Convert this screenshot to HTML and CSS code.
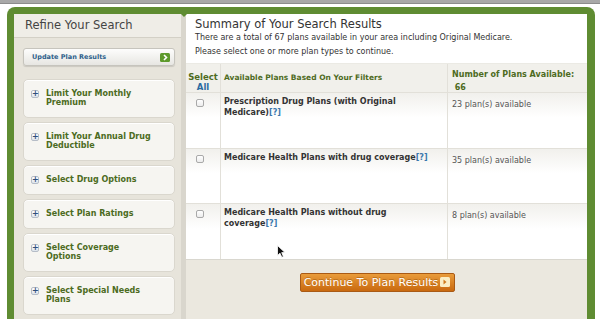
FILE: index.html
```html
<!DOCTYPE html>
<html lang="en">
<head>
    <meta charset="UTF-8">
    <meta name="viewport" content="width=device-width, initial-scale=1.0">
    <title>Refine Your Search</title>
    <link rel="stylesheet" href="styles.css">
</head>
<body>
    <div class="topbar"></div>
    <div class="frame">
        <aside class="sidebar">
            <div class="sidebar-head">Refine Your Search</div>
            <div class="sidebar-body">
                <button class="update-btn">
                    <span>Update Plan Results</span>
                    <svg class="go-icon" width="10" height="9" viewBox="0 0 10 9">
                        <rect width="10" height="9" rx="1.5" fill="#5e9a2c"/>
                        <path d="M4 2 L6.5 4.5 L4 7" fill="none" stroke="#fff" stroke-width="1.6"/>
                    </svg>
                </button>
                <ul class="filter-list">
                    <li class="filter"><span class="plus">+</span><span class="filter-text">Limit Your Monthly Premium</span></li>
                    <li class="filter"><span class="plus">+</span><span class="filter-text">Limit Your Annual Drug Deductible</span></li>
                    <li class="filter"><span class="plus">+</span><span class="filter-text">Select Drug Options</span></li>
                    <li class="filter"><span class="plus">+</span><span class="filter-text">Select Plan Ratings</span></li>
                    <li class="filter"><span class="plus">+</span><span class="filter-text">Select Coverage Options</span></li>
                    <li class="filter"><span class="plus">+</span><span class="filter-text">Select Special Needs Plans</span></li>
                </ul>
            </div>
        </aside>

        <main class="main">
            <div class="summary">
                <h1>Summary of Your Search Results</h1>
                <p>There are a total of 67 plans available in your area including Original Medicare.</p>
                <p>Please select one or more plan types to continue.</p>
            </div>

            <div class="plans">
                <div class="plan-row plan-head">
                    <div class="cell cell-check"><span class="select-label">Select</span><br><a class="select-all">All</a></div>
                    <div class="cell cell-name head-text">Available Plans Based On Your Filters</div>
                    <div class="cell cell-count head-text head-count">Number of Plans Available:<br>&nbsp;66</div>
                </div>
                <div class="plan-row">
                    <div class="cell cell-check"><input type="checkbox" class="check"></div>
                    <div class="cell cell-name">Prescription Drug Plans (with Original Medicare)<a class="help">[?]</a></div>
                    <div class="cell cell-count">23 plan(s) available</div>
                </div>
                <div class="plan-row">
                    <div class="cell cell-check"><input type="checkbox" class="check"></div>
                    <div class="cell cell-name">Medicare Health Plans with drug coverage<a class="help">[?]</a></div>
                    <div class="cell cell-count">35 plan(s) available</div>
                </div>
                <div class="plan-row">
                    <div class="cell cell-check"><input type="checkbox" class="check"></div>
                    <div class="cell cell-name">Medicare Health Plans without drug coverage<a class="help">[?]</a></div>
                    <div class="cell cell-count">8 plan(s) available</div>
                </div>
            </div>

            <div class="actions">
                <button class="continue-btn">
                    <span>Continue To Plan Results</span>
                    <svg class="go-icon" width="10" height="10" viewBox="0 0 10 10">
                        <rect width="10" height="10" rx="1.5" fill="#fbeec4"/>
                        <path d="M3.5 2.5 L6.5 5 L3.5 7.5 Z" fill="#cf7a1c"/>
                    </svg>
                </button>
            </div>
        </main>

        <svg class="cursor" width="9" height="13" viewBox="0 0 9 13">
            <path d="M0.5 0.5 L0.5 10.5 L3 8.2 L4.8 12.3 L6.4 11.6 L4.7 7.6 L8 7.6 Z" fill="#111" stroke="#fff" stroke-width="0.8"/>
        </svg>
    </div>
</body>
</html>
```

FILE: styles.css
```css
body {
    font-family: "DejaVu Sans", Verdana, sans-serif;
    font-size: 8px;
    color: #333;
    margin: 0;
    background: #fff;
    height: 319px;
    overflow: hidden;
}
.topbar {
    height: 3px;
    background-color: #a8a8a8;
    border-bottom: 1px solid #8c8c8c;
}
.frame {
    position: relative;
    display: flex;
    box-sizing: border-box;
    height: 315px;
    margin: 3px 5px 0 7px;
    padding: 7px 8px 0 7px;
    background-color: #5f8c32;
    border-radius: 8px 8px 0 0;
    overflow: hidden;
}
.sidebar {
    position: relative;
    width: 167px;
    background-color: #e7e4db;
    border-right: 5px solid #d9d6cd;
}
.sidebar::after {
    content: "";
    position: absolute;
    top: 0;
    right: -6px;
    border-left: 3px solid transparent;
    border-right: 3px solid transparent;
    border-top: 3px solid #5f8c32;
}
.sidebar-head {
    height: 23px;
    line-height: 23px;
    padding-left: 11px;
    font-size: 11.5px;
    color: #444;
    background-color: #efede7;
    border-bottom: 1px solid #d3d0c6;
}
.sidebar-body {
    padding: 10px 6px 0 9px;
}
.update-btn {
    display: flex;
    align-items: center;
    justify-content: space-between;
    box-sizing: border-box;
    width: 100%;
    height: 18px;
    padding: 0 4px 0 8px;
    font-family: "DejaVu Sans", Verdana, sans-serif;
    font-size: 6.5px;
    font-weight: bold;
    color: #2d5f8b;
    background: linear-gradient(#fdfdfc, #e7e6e2);
    border: 1px solid #c6c4bd;
    border-radius: 3px;
    box-shadow: 0 1px 1px rgba(0, 0, 0, 0.12);
}
.filter-list {
    list-style-type: none;
    margin: 13px 0 0;
    padding: 0;
}
.filter {
    display: flex;
    align-items: flex-start;
    gap: 7px;
    padding: 9px 6px 9.5px 7px;
    margin-bottom: 4.5px;
    background-color: #f6f5f1;
    border: 1px solid #dad7ce;
    border-radius: 5px;
    box-shadow: inset 0 1px 0 #fff;
}
.plus {
    flex: none;
    box-sizing: border-box;
    width: 8px;
    height: 8px;
    margin-top: 0.5px;
    font-size: 8px;
    font-weight: bold;
    line-height: 6px;
    text-align: center;
    color: #2d4f7a;
    background: linear-gradient(#fff, #dde4ec);
    border: 1px solid #b6bdc7;
    border-radius: 2px;
}
.filter-text {
    max-width: 106px;
    font-weight: bold;
    line-height: 9px;
    color: #4c6b22;
}
.main {
    flex: 1;
    display: flex;
    flex-direction: column;
    background-color: #ebe8df;
}
.summary {
    height: 42px;
    padding: 3px 9px 4px;
    background-color: #fff;
}
.summary h1 {
    margin: 0;
    font-size: 11.5px;
    font-weight: normal;
    line-height: 14px;
    color: #333;
}
.summary p {
    margin: 0;
    line-height: 14px;
}
.plans {
    background-color: #fff;
    border-bottom: 1px solid #d9d7cf;
}
.plan-row {
    display: grid;
    grid-template-columns: 34px 227px 1fr;
    box-sizing: border-box;
    height: 55.5px;
    border-top: 1px solid #e2e0d9;
    background: linear-gradient(#f1f0ec, #fff 45%);
}
.plan-head {
    height: 29px;
    border-top: 1px solid #ebeae4;
    background: #f1f0eb;
}
.cell {
    line-height: 11px;
}
.cell-check {
    padding: 6px 0 0 10px;
}
.cell-name {
    padding: 3px 12px 0 3px;
    font-weight: bold;
    border-left: 1px solid #e2e0d9;
}
.cell-count {
    padding: 6px 0 0 4px;
    color: #555;
    border-left: 1px solid #e2e0d9;
}
.plan-head .cell-check {
    padding: 8px 0 0;
    font-size: 8.5px;
    font-weight: bold;
    line-height: 10px;
    text-align: center;
}
.select-label {
    color: #4e6b1e;
}
.select-all {
    color: #2c6aa0;
}
.head-text {
    padding-top: 9px;
    font-size: 7.5px;
    font-weight: bold;
    line-height: 10px;
    color: #4e6b1e;
}
.head-count {
    padding-top: 4px;
    font-size: 8px;
    line-height: 13px;
}
.check {
    appearance: none;
    display: block;
    width: 8px;
    height: 8px;
    margin: 0;
    background: linear-gradient(#fff, #ececec);
    border: 1px solid #a9a9a9;
    border-radius: 2px;
}
.help {
    color: #3a78ad;
}
.actions {
    padding: 13px 18px 0 0;
    text-align: center;
}
.continue-btn {
    display: inline-flex;
    align-items: center;
    gap: 2px;
    height: 19px;
    padding: 0 4px 0 3px;
    font-family: "DejaVu Sans", Verdana, sans-serif;
    font-size: 11px;
    color: #fff;
    text-shadow: 0 -1px 0 rgba(120, 60, 0, 0.4);
    background: linear-gradient(#e99c3b, #c9690f);
    border: 1px solid #a95a15;
    border-radius: 2px;
}
.cursor {
    position: absolute;
    left: 270px;
    top: 238px;
}
```
